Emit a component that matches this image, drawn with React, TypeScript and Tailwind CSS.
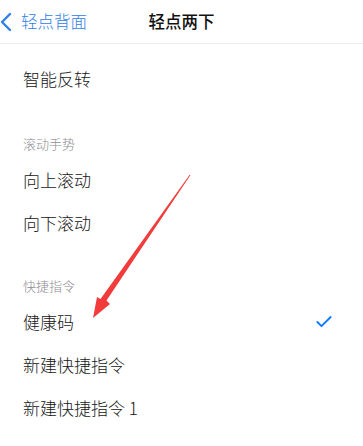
import { Check } from "lucide-react";

const font = { fontFamily: '"Noto Sans CJK SC", "Noto Sans", sans-serif' };

function Row({ label, checked }: { label: string; checked?: boolean }) {
  return (
    <div className="flex h-[43px] items-center justify-between pl-[23px] pr-[29px]">
      <span className="text-[17px] font-light leading-none text-[#161616]">{label}</span>
      {checked ? <Check className="h-[20px] w-[20px] text-[#0a7aff]" strokeWidth={2.2} /> : null}
    </div>
  );
}

function SectionHeader({ label }: { label: string }) {
  return (
    <div className="flex h-[22px] items-end pl-[23px] text-[13px] font-light leading-none text-[#8e8e93]">
      {label}
    </div>
  );
}

export default function App() {
  return (
    <div className="relative h-[446px] w-[363px] overflow-hidden bg-white" style={font}>
      <div className="relative flex h-[44px] items-center border-b border-[#ececec]">
        <div className="flex items-center text-[#2f80e6]">
          <svg width="12" height="20" viewBox="0 0 12 20">
            <path d="M10 2 L2 10 L10 18" fill="none" stroke="currentColor" strokeWidth="2.4" strokeLinecap="round" strokeLinejoin="round" />
          </svg>
          <span className="ml-[9px] text-[16.5px] font-light leading-none">轻点背面</span>
        </div>
        <div className="absolute left-1/2 -translate-x-1/2 text-[16.5px] font-medium leading-none text-[#111]">
          轻点两下
        </div>
      </div>

      <div className="mt-[13px]">
        <Row label="智能反转" />
      </div>
      <div className="mt-[28px]">
        <SectionHeader label="滚动手势" />
      </div>
      <div className="mt-[8px]">
        <Row label="向上滚动" />
        <Row label="向下滚动" />
      </div>
      <div className="mt-[26px]">
        <SectionHeader label="快捷指令" />
      </div>
      <div className="mt-[8px]">
        <Row label="健康码" checked />
        <Row label="新建快捷指令" />
        <Row label="新建快捷指令 1" />
      </div>

      <svg className="pointer-events-none absolute left-0 top-0" width="363" height="446" viewBox="0 0 363 446">
        <path
          d="M190.5 175 L106.5 300.5 L110 304 L93 318 L97 297 L100.5 299 L189.5 175 Z"
          fill="#f23b3b"
        />
      </svg>
    </div>
  );
}
